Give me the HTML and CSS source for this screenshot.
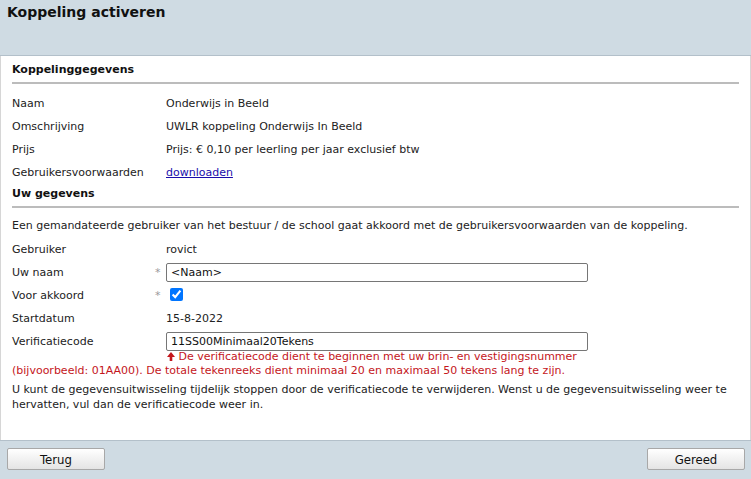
FILE: index.html
```html
<!DOCTYPE html>
<html lang="nl">
<head>
    <meta charset="UTF-8">
    <title>Koppeling activeren</title>
    <link rel="stylesheet" href="styles.css">
</head>
<body>
    <div class="page">
        <div class="header">
            <h1>Koppeling activeren</h1>
        </div>

        <div class="panel">
            <h2 class="section-title">Koppelinggegevens</h2>
            <div class="rows">
                <div class="row">
                    <span class="label">Naam</span><span class="star"></span>
                    <span class="value">Onderwijs in Beeld</span>
                </div>
                <div class="row">
                    <span class="label">Omschrijving</span><span class="star"></span>
                    <span class="value">UWLR koppeling Onderwijs In Beeld</span>
                </div>
                <div class="row">
                    <span class="label">Prijs</span><span class="star"></span>
                    <span class="value">Prijs: € 0,10 per leerling per jaar exclusief btw</span>
                </div>
                <div class="row">
                    <span class="label">Gebruikersvoorwaarden</span><span class="star"></span>
                    <span class="value"><a href="#">downloaden</a></span>
                </div>
            </div>

            <h2 class="section-title">Uw gegevens</h2>
            <p class="intro">Een gemandateerde gebruiker van het bestuur / de school gaat akkoord met de gebruikersvoorwaarden van de koppeling.</p>
            <div class="rows">
                <div class="row">
                    <span class="label">Gebruiker</span><span class="star"></span>
                    <span class="value">rovict</span>
                </div>
                <div class="row">
                    <span class="label">Uw naam</span><span class="star">*</span>
                    <span class="value"><input class="field" type="text" value="&lt;Naam&gt;"></span>
                </div>
                <div class="row">
                    <span class="label">Voor akkoord</span><span class="star">*</span>
                    <span class="value"><input class="check" type="checkbox" checked></span>
                </div>
                <div class="row">
                    <span class="label">Startdatum</span><span class="star"></span>
                    <span class="value">15-8-2022</span>
                </div>
                <div class="row">
                    <span class="label">Verificatiecode</span><span class="star"></span>
                    <span class="value"><input class="field" type="text" value="11SS00Minimaal20Tekens"></span>
                </div>
            </div>
            <div class="error">
                <span class="error-first"><svg class="arrow" width="8" height="9" viewBox="0 0 8 9"><path d="M4 0 L8 5 L5.3 5 L5.3 9 L2.7 9 L2.7 5 L0 5 Z" fill="#c4161c"/></svg> De verificatiecode dient te beginnen met uw brin- en vestigingsnummer</span>
                (bijvoorbeeld: 01AA00). De totale tekenreeks dient minimaal 20 en maximaal 50 tekens lang te zijn.
            </div>
            <p class="note">U kunt de gegevensuitwisseling tijdelijk stoppen door de verificatiecode te verwijderen. Wenst u de gegevensuitwisseling weer te hervatten, vul dan de verificatiecode weer in.</p>
        </div>

        <div class="footer">
            <button class="btn">Terug</button>
            <button class="btn">Gereed</button>
        </div>
    </div>
</body>
</html>
```

FILE: styles.css
```css
body {
    margin: 0;
    padding: 0;
    font-family: "DejaVu Sans", Verdana, sans-serif;
    font-size: 11px;
    color: #222;
    background: #fff;
}

.page {
    height: 479px;
    display: flex;
    flex-direction: column;
}

.header {
    height: 55px;
    background: #cfdbe3;
    border-bottom: 1px solid #b3c0ca;
}

.header h1 {
    margin: 0;
    padding: 4px 7px;
    font-size: 14px;
    font-weight: bold;
    color: #111;
}

.panel {
    flex: 1;
    padding: 6px 11px 0 11px;
    border-left: 1px solid #d6d6d6;
    border-right: 1px solid #d6d6d6;
}

.section-title {
    margin: 0 0 8px 0;
    padding-bottom: 4px;
    font-size: 11px;
    font-weight: bold;
    line-height: 16px;
    color: #111;
    border-bottom: 2px solid #bcbcbc;
}

.rows + .section-title {
    margin-top: 2px;
}

.row {
    display: grid;
    grid-template-columns: 143px 11px 1fr;
    align-items: center;
    height: 23px;
}

.star {
    color: #999;
    font-size: 11px;
}

.value a {
    color: #1a0dab;
}

.intro {
    margin: 10px 0 5px 0;
    line-height: 15px;
}

.field {
    box-sizing: border-box;
    width: 422px;
    height: 19px;
    margin: 0;
    padding: 0 4px;
    border: 1px solid #767676;
    border-radius: 2px;
    font-family: "DejaVu Sans", Verdana, sans-serif;
    font-size: 11px;
    color: #111;
}

.check {
    width: 13px;
    height: 13px;
    margin: 0 0 0 4px;
    accent-color: #0075ff;
}

.error {
    margin-top: -3px;
    line-height: 14px;
    color: #c4161c;
}

.error-first {
    display: block;
    padding-left: 155px;
}

.arrow {
    vertical-align: -1px;
}

.note {
    margin: 4px 0 0 0;
    line-height: 15px;
}

.footer {
    height: 31px;
    background: #cfdbe3;
    border-top: 1px solid #b3c0ca;
    display: flex;
    justify-content: space-between;
    align-items: flex-start;
    padding: 7px 6px 0 7px;
}

.btn {
    width: 98px;
    height: 22px;
    font-family: "DejaVu Sans Condensed", "DejaVu Sans", sans-serif;
    font-size: 13px;
    color: #111;
    background: linear-gradient(#ffffff, #e4e4e4);
    border: 1px solid #a8a8a8;
    border-radius: 2px;
    cursor: pointer;
}
```
